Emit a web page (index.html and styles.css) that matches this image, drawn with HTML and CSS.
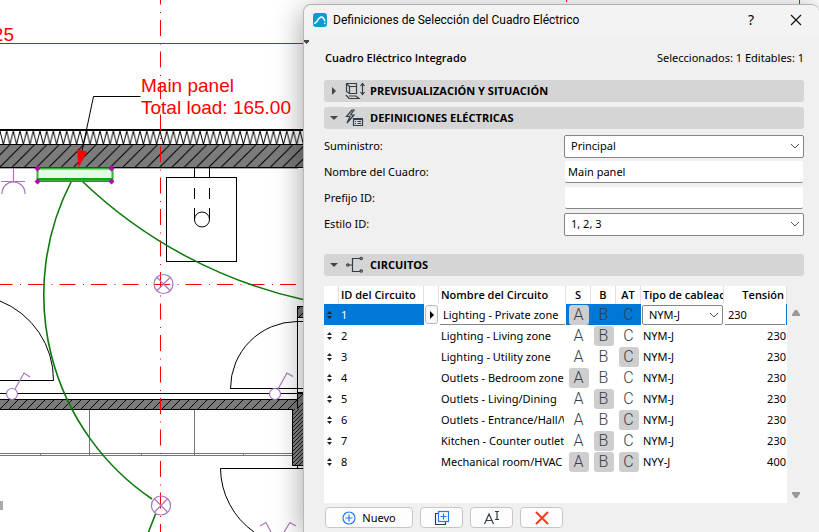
FILE: index.html
```html
<!DOCTYPE html>
<html lang="es">
<head>
<meta charset="utf-8">
<title>Definiciones de Selección del Cuadro Eléctrico</title>
<link rel="stylesheet" href="styles.css">
</head>
<body>
<main class="workspace">
<svg class="plan" aria-label="Plano eléctrico">
  <defs>
    <pattern id="insulation" width="6.67" height="14" patternUnits="userSpaceOnUse" y="131"><path d="M0 0L3.3 13.5L6.67 0" fill="none" stroke="#000" stroke-width="1"/></pattern>
    <pattern id="wall" width="12.3" height="22" patternUnits="userSpaceOnUse" y="145"><rect width="13" height="22" fill="#7b7b7b"/><path d="M-24.6 22L-2.6 0M-12.3 22L9.7 0M0 22L22 0M12.3 22L34.3 0" stroke="#000"/></pattern>
    <pattern id="partition" width="9" height="9" patternUnits="userSpaceOnUse" y="400"><rect width="9" height="9" fill="#7b7b7b"/><path d="M-1 10L10 -1M-1 1L1 -1M8 10L10 8" stroke="#000"/></pattern>
    <pattern id="dense" width="4" height="4" patternUnits="userSpaceOnUse"><rect width="4" height="4" fill="#808080"/><path d="M-1 5L5 -1M-1 1L1 -1M3 5L5 3" stroke="#000" stroke-width=".8"/></pattern>
  </defs>
  <rect y="131" width="305" height="14" fill="url(#insulation)"/>
  <rect y="145" width="305" height="22" fill="url(#wall)"/>
  <rect y="400" width="297" height="9" fill="url(#partition)"/>
  <rect x="297" y="306" width="8" height="11" fill="url(#partition)"/>
  <rect x="297" y="392" width="8" height="17" fill="url(#partition)"/>
  <rect x="292" y="409" width="13" height="57" fill="url(#dense)"/>
  <path d="M0 168.500H298" stroke="#aaa"/>
  <g fill="none" stroke="#000">
    <path d="M0 130H305" stroke-width="2"/>
    <path d="M0 144.500H305M0 167.500H305M0 393.500H305M0 399.500H297M0 409.500H292"/>
    <path d="M0 301A85 85 0 0 1 53.500 380.500H0M230.500 388.500A67 67 0 0 1 297 321.500H305M230 388.500H305"/>
    <path d="M297.500 306V409M297 306.500H305M297 317.500H305M297 392.500H305M292.500 409V465.500H305M297.500 465V468M305 468.500H220.500A79 79 0 0 0 254 532"/>
    <rect x="166.500" y="177.500" width="70" height="84"/>
    <path d="M194.500 168V178M209.500 168V178M194.500 188V199M209.500 188V199M194.500 208V220M209.500 208V220"/>
    <circle cx="202" cy="219.500" r="7.500"/>
    <path d="M140.500 96.500H93.500L82 151"/>
  </g>
  <path d="M89.500 410V455M194.500 410V455M0 453.500H292M0 455.500H292M40.500 453V456M141.500 453V456M243.500 453V456" stroke="#777" fill="none"/>
  <g stroke="#f00" fill="none">
    <path d="M160.500 -11.500V532" stroke-dasharray="16 7.500 1 7"/>
    <path d="M-3.500 284.500H305" stroke-dasharray="16 7.500 1 7"/>
  </g>
  <path d="M0 43H305V44H0ZM799 0H800V8H799ZM566 0H567V2H566Z" fill="#f00"/>
  <g stroke="#0b7a0b" stroke-width="1.600" fill="none">
    <path d="M71.500 181A247 247 0 0 0 152 499M82 181A467 467 0 0 0 305 300M155.500 514L148.500 532"/>
  </g>
  <rect x="37.500" y="168.500" width="75" height="12" fill="#e4fce4" stroke="#35b235" stroke-width="2"/>
  <path d="M37 179H113" stroke="#12a812" stroke-width="2"/><path d="M37 181.500H113" stroke="#448044"/>
  <path d="M77 149.500L87 151.500L78.500 168Z" fill="#f00"/>
  <path d="M37.500 165.500l3 3-3 3-3-3zM37.500 178.500l3 3-3 3-3-3zM111.500 165.500l3 3-3 3-3-3zM111.500 178.500l3 3-3 3-3-3z" fill="#b800b8"/>
  <g stroke="#a976bd" fill="none" stroke-width="1.200">
    <path d="M13.500 168V181.500M1 181.500H25M2 194C2 178 25 178 25 194"/>
    <path d="M15 389L24 373L30 377M278 389L287 373L293 376.500M260 526L266 522.500L271 532M284 532L290 522.500L296 526"/>
    <circle cx="12" cy="394" r="5.500" fill="#fff"/><circle cx="275" cy="394" r="5.500" fill="#fff"/>
    <circle cx="163.500" cy="284" r="9.500"/><path d="M157 277.500L170 290.500M170 277.500L157 290.500"/>
    <circle cx="161" cy="505.500" r="9.500"/><path d="M154.500 499L167.500 512M167.500 499L154.500 512"/>
  </g>
  <path d="M0 501h3v9h-3z" fill="#aaa"/>
  <g class="plan-text">
    <text x="14" y="41" text-anchor="end">25</text>
    <text x="141" y="92">Main panel</text>
    <text x="141" y="114">Total load: 165.00</text>
  </g>
</svg>

<section class="dialog" aria-label="Definiciones de Selección del Cuadro Eléctrico">
  <header class="titlebar">
    <svg class="logo" viewBox="0 0 14 14"><rect width="14" height="14" rx="3" fill="#0b9bd0"/><path d="M1.800 10.200C4.500 9.500 5 4 8.500 4C10.500 4 11 6 11.800 7.800M11.800 10.300V10.500" fill="none" stroke="#fff" stroke-width="1.500" stroke-linecap="round"/></svg>
    <h1>Definiciones de Selección del Cuadro Eléctrico</h1>
    <button class="win-btn help">?</button>
    <button class="win-btn" aria-label="Cerrar"><svg width="12" height="12"><path d="M1 1L11 11M11 1L1 11" stroke="#111" stroke-width="1.200"/></svg></button>
  </header>
  <svg class="grip" width="5" height="4"><path d="M0 0H5V1.500L2.500 4L0 1.500Z" fill="#444"/></svg>
  <div class="content">
    <div class="summary"><strong>Cuadro Eléctrico Integrado</strong><span>Seleccionados: 1 Editables: 1</span></div>

    <button class="section">
      <svg class="tri" viewBox="0 0 8 8"><path d="M2 0L6 4L2 8Z"/></svg>
      <svg class="sec-icon" viewBox="0 0 20 18"><path d="M1.500 1.500H11.500V11.500H4.500L1.500 9.500ZM4.500 11.500V4.500H11.500M1.500 1.500L4.500 4.500M1 13L4 16.500H14L11 14H4M17.500 2V12M15.500 4L17.500 1.500L19.500 4M15.500 10L17.500 12.500L19.500 10"/></svg>
      <span>PREVISUALIZACIÓN Y SITUACIÓN</span>
    </button>
    <button class="section">
      <svg class="tri" viewBox="0 0 8 8"><path d="M0 2H8L4 6Z"/></svg>
      <svg class="sec-icon" viewBox="0 0 20 18"><path d="M7 1L1.500 7.500H5L2 14L9 6H5.500L9 1ZM8.500 9.500H17.500V16.500H8.500ZM8.500 10.500H17.500M10 12.500H11M12.500 12.500H16M10 14.500H11M12.500 14.500H16"/></svg>
      <span>DEFINICIONES ELÉCTRICAS</span>
    </button>

    <div class="form">
      <label for="supply">Suministro:</label>
      <div class="picker"><select id="supply"><option>Principal</option></select><svg width="10" height="6"><path d="M1 1L5 5L9 1"/></svg></div>
      <label for="name">Nombre del Cuadro:</label>
      <input id="name" class="field" type="text" value="Main panel">
      <label for="prefix">Prefijo ID:</label>
      <input id="prefix" class="field" type="text" value="">
      <label for="style">Estilo ID:</label>
      <div class="picker"><select id="style"><option>1, 2, 3</option></select><svg width="10" height="6"><path d="M1 1L5 5L9 1"/></svg></div>
    </div>

    <button class="section">
      <svg class="tri" viewBox="0 0 8 8"><path d="M0 2H8L4 6Z"/></svg>
      <svg class="sec-icon" viewBox="0 0 20 18"><path d="M4 9H7.500M15 2.500H7.500V15.500H15"/><circle cx="2.800" cy="9" r="1.200"/><circle cx="16.200" cy="2.500" r="1.200"/><circle cx="16.200" cy="15" r="1.200"/></svg>
      <span>CIRCUITOS</span>
    </button>

    <div class="list">
      <div class="sheet">
        <table>
          <colgroup><col class="c-sort"><col class="c-id"><col class="c-go"><col><col class="c-ph"><col class="c-ph"><col class="c-ph"><col class="c-type"><col class="c-volt"></colgroup>
          <thead><tr><th></th><th>ID del Circuito</th><th></th><th>Nombre del Circuito</th><th class="mid">S</th><th class="mid">B</th><th class="mid">AT</th><th>Tipo de cableado</th><th class="num">Tensión</th></tr></thead>
          <tbody>
            <tr class="selected"><td><svg class="sort" viewBox="0 0 5 8"><path d="M0 3L2.500 0L5 3ZM0 5H5L2.500 8Z"/></svg></td><td class="id">1</td><td class="go"><button aria-label="Abrir"><svg width="4" height="8"><path d="M0 0L4 4L0 8Z"/></svg></button></td><td class="edit"><input type="text" aria-label="Nombre del circuito" value="Lighting - Private zone"></td><td class="ph"><button class="on">A</button></td><td class="ph"><button>B</button></td><td class="ph"><button>C</button></td><td class="edit"><div class="picker small"><select aria-label="Tipo de cableado"><option>NYM-J</option></select><svg width="10" height="6"><path d="M1 1L5 5L9 1"/></svg></div></td><td class="edit volt"><input type="text" aria-label="Tensión" value="230"></td></tr>
            <tr><td><svg class="sort" viewBox="0 0 5 8"><path d="M0 3L2.500 0L5 3ZM0 5H5L2.500 8Z"/></svg></td><td>2</td><td></td><td class="name">Lighting - Living zone</td><td class="ph"><button>A</button></td><td class="ph"><button class="on">B</button></td><td class="ph"><button>C</button></td><td>NYM-J</td><td class="num">230</td></tr>
            <tr><td><svg class="sort" viewBox="0 0 5 8"><path d="M0 3L2.500 0L5 3ZM0 5H5L2.500 8Z"/></svg></td><td>3</td><td></td><td class="name">Lighting - Utility zone</td><td class="ph"><button>A</button></td><td class="ph"><button>B</button></td><td class="ph"><button class="on">C</button></td><td>NYM-J</td><td class="num">230</td></tr>
            <tr><td><svg class="sort" viewBox="0 0 5 8"><path d="M0 3L2.500 0L5 3ZM0 5H5L2.500 8Z"/></svg></td><td>4</td><td></td><td class="name">Outlets - Bedroom zone</td><td class="ph"><button class="on">A</button></td><td class="ph"><button>B</button></td><td class="ph"><button>C</button></td><td>NYM-J</td><td class="num">230</td></tr>
            <tr><td><svg class="sort" viewBox="0 0 5 8"><path d="M0 3L2.500 0L5 3ZM0 5H5L2.500 8Z"/></svg></td><td>5</td><td></td><td class="name">Outlets - Living/Dining</td><td class="ph"><button>A</button></td><td class="ph"><button class="on">B</button></td><td class="ph"><button>C</button></td><td>NYM-J</td><td class="num">230</td></tr>
            <tr><td><svg class="sort" viewBox="0 0 5 8"><path d="M0 3L2.500 0L5 3ZM0 5H5L2.500 8Z"/></svg></td><td>6</td><td></td><td class="name">Outlets - Entrance/Hall/W</td><td class="ph"><button>A</button></td><td class="ph"><button>B</button></td><td class="ph"><button class="on">C</button></td><td>NYM-J</td><td class="num">230</td></tr>
            <tr><td><svg class="sort" viewBox="0 0 5 8"><path d="M0 3L2.500 0L5 3ZM0 5H5L2.500 8Z"/></svg></td><td>7</td><td></td><td class="name">Kitchen - Counter outlet</td><td class="ph"><button>A</button></td><td class="ph"><button class="on">B</button></td><td class="ph"><button>C</button></td><td>NYM-J</td><td class="num">230</td></tr>
            <tr><td><svg class="sort" viewBox="0 0 5 8"><path d="M0 3L2.500 0L5 3ZM0 5H5L2.500 8Z"/></svg></td><td>8</td><td></td><td class="name">Mechanical room/HVAC</td><td class="ph"><button class="on">A</button></td><td class="ph"><button class="on">B</button></td><td class="ph"><button class="on">C</button></td><td>NYY-J</td><td class="num">400</td></tr>
          </tbody>
        </table>
      </div>
      <div class="scroll">
        <svg width="8" height="6"><path d="M0 6V4.500L3 0H5L8 4.500V6Z"/></svg>
        <svg width="8" height="6"><path d="M0 0V1.500L3 6H5L8 1.500V0Z"/></svg>
      </div>
    </div>

    <div class="actions">
      <button class="wide"><svg width="14" height="14"><circle cx="7" cy="7" r="6"/><path d="M7 3.500V10.500M3.500 7H10.500"/></svg><span>Nuevo</span></button>
      <button aria-label="Duplicar"><svg width="16" height="16"><path d="M4 3.500H1.500V14.500H11.500V12" stroke="#333f48"/><rect x="4.500" y="1.500" width="10" height="10"/><path d="M9.500 3.500V9.500M6.500 6.500H12.500"/></svg></button>
      <button aria-label="Renombrar"><svg width="18" height="16"><path d="M1.500 14L6 4L10.500 14M3 10.500H9M12 1.500H13.500L14 2L14.500 1.500H16M12 9.500H13.500L14 9L14.500 9.500H16M14 2V9" stroke="#333f48"/></svg></button>
      <button aria-label="Eliminar"><svg width="16" height="16"><path d="M2 2L14 14M14 2L2 14" stroke="#f93a1d" stroke-width="2"/></svg></button>
    </div>
  </div>
</section>
</main>
</body>
</html>
```
FILE: styles.css
```css
* { box-sizing: border-box; }
body { margin: 0; background: #fff; color: #000; font: 11px/16px "Noto Sans", "Open Sans", sans-serif; }
button, input, select { margin: 0; padding: 0; border: 0; background: none; color: inherit; font: inherit; }
svg { display: block; flex: none; }
.workspace { position: relative; height: 100vh; overflow: hidden; }
.plan { position: absolute; inset: 0; width: 100%; height: 100%; }
.plan-text { font: 19px "Liberation Sans", sans-serif; fill: #f00; }

.dialog { position: absolute; left: 303px; right: 0; top: 4px; bottom: 0; background: #f0f0f0; border-top: 1px solid #b0b0b0; border-left: 1px solid #b8b8b8; border-radius: 8px 8px 0 0; box-shadow: 0 6px 30px rgba(0, 0, 0, .38); }
.titlebar { display: flex; align-items: center; height: 30px; padding: 0 10px 0 9px; background: #f3f3f3; border-radius: 8px 8px 0 0; }
.logo { width: 14px; height: 14px; }
.titlebar h1 { flex: 1; margin: 0 0 0 6px; font: 400 12px/16px Roboto, sans-serif; white-space: nowrap; }
.win-btn { display: grid; place-items: center; width: 26px; height: 26px; margin-left: 19px; }
.help { font-size: 14px; }
.grip { position: absolute; left: 0; top: 35px; }
.content { padding: 0 15px 0 20px; }
.summary { display: flex; justify-content: space-between; padding: 15px 0 14px 1px; }
.summary strong, .section, th { font-family: "Open Sans", sans-serif; font-weight: 700; }
.summary strong, th { font-weight: 600; }

.section { display: flex; align-items: center; width: 100%; height: 22px; margin-bottom: 5px; padding: 0 6px; border-radius: 3px; background: #d5d5d5; text-align: left; }
.section span { margin-left: 5px; }
.tri { width: 8px; height: 8px; fill: #444; }
.sec-icon { width: 20px; height: 18px; margin-left: 7px; fill: none; stroke: #333f48; stroke-width: 1.2; }

.form { display: grid; grid-template-columns: 1fr 240px; grid-auto-rows: 26px; align-items: center; margin: -1px 0 17px; }
.field { width: 238px; height: 22px; margin: 0 1px; padding: 0 3px; background: #fff; border-bottom: 1px solid #858585; border-radius: 2px; }
.picker { display: grid; grid-template-columns: 1fr 10px; align-items: center; height: 23px; padding: 0 3px 0 6px; background: #fff; border: 1px solid #858585; border-radius: 2px; }
.picker select { appearance: none; width: 100%; }
.picker svg { fill: none; stroke: #555; }

.list { display: flex; margin-top: 10px; }
.sheet { flex: 1; min-width: 0; height: 217px; background: #fff; }
table { width: 100%; table-layout: fixed; border-collapse: separate; border-spacing: 0; }
.c-sort { width: 15px; }
.c-id { width: 85px; }
.c-go { width: 15px; }
.c-ph { width: 25px; }
.c-type { width: 83px; }
.c-volt { width: 63px; }
th { height: 18px; padding: 0 2px; border-right: 1px solid #e0e0e0; text-align: left; white-space: nowrap; overflow: hidden; }
td { height: 21px; padding: 0 2px; white-space: nowrap; overflow: hidden; }
th.mid { text-align: center; }
th.num { text-align: right; }
td.num { padding-right: 1px; text-align: right; }
td.name { border-right: 2px solid #fff; }
.sort { width: 5px; height: 8px; margin: 0 1px; fill: #222; }
.ph { padding: 0 2px; }
.ph button { display: block; width: 20px; height: 20px; margin: 0 auto; border-radius: 3px; color: #333f48; font: 300 16px/20px Roboto, sans-serif; }
.ph .on { background: #cecece; }
.selected td { background: #0078d7; }
.selected .id { color: #fff; }
.selected .go { padding: 0 1px; background: #fff; }
.go button { display: grid; place-items: center; width: 13px; height: 19px; border: 1px solid #bbb; border-radius: 3px; background: #f8f8f8; }
.selected .edit { padding: 0 1px; background: #fff; }
.edit > input { display: block; width: 100%; height: 20px; padding: 0 3px; border-bottom: 1px solid #858585; }
.selected .volt { border-right: 1px solid #0078d7; }
.picker.small { height: 20px; }
.scroll { display: flex; flex-direction: column; justify-content: space-between; align-items: center; width: 17px; padding: 24px 0 5px; fill: #999; }

.actions { display: flex; gap: 7px; padding: 4px 1px; }
.actions button { display: flex; align-items: center; justify-content: center; gap: 6px; width: 43px; height: 21px; border: 1px solid #c6c6c6; border-radius: 4px; background: #fdfdfd; }
.actions .wide { width: 88px; }
.actions svg { fill: none; stroke: #2878f0; stroke-width: 1.2; }
```
